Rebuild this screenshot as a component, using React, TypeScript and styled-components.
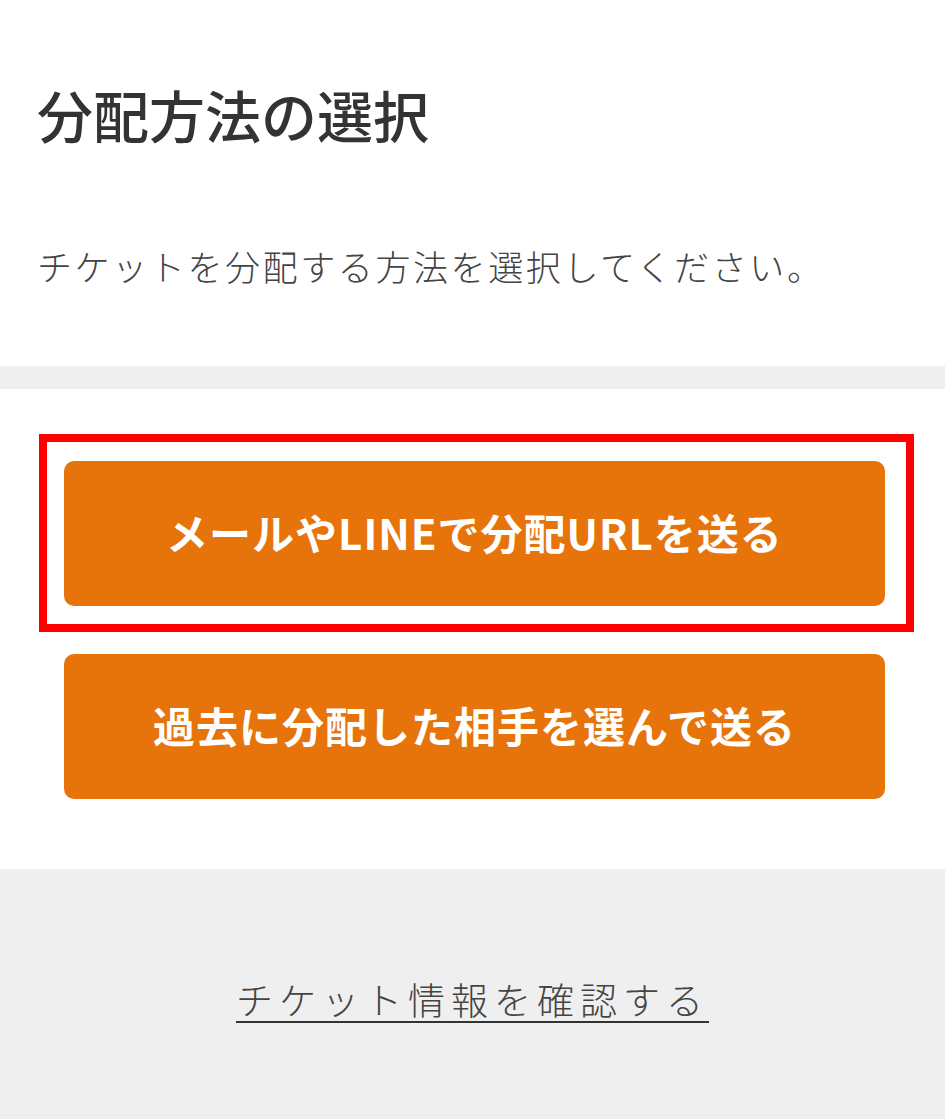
import React from "react";
import styled, { createGlobalStyle } from "styled-components";

const Global = createGlobalStyle`
  html, body { margin: 0; padding: 0; background: #ffffff; }
  body { font-family: "Noto Sans CJK JP", "Noto Sans", sans-serif; color: #333; }
  * { box-sizing: border-box; }
`;

const Page = styled.div`
  display: flex;
  flex-direction: column;
  min-height: 1119px;
`;

const Header = styled.section`
  background: #fff;
  padding: 72px 37px 74px;
  display: flex;
  flex-direction: column;
  gap: 84px;
`;

const Title = styled.h1`
  margin: 0;
  font-size: 56px;
  line-height: 84px;
  font-weight: 500;
  color: #333;
`;

const Lead = styled.p`
  margin: 0;
  font-size: 35px;
  line-height: 52px;
  letter-spacing: 2.6px;
  font-weight: 300;
  color: #444;
`;

const Band = styled.div`
  height: 23px;
  background: #efefef;
`;

const Actions = styled.section`
  background: #fff;
  padding: 72px 60px 70px 64px;
  display: flex;
  flex-direction: column;
  gap: 48px;
`;

const ActionButton = styled.button<{ $highlight?: boolean }>`
  position: relative;
  height: 145px;
  width: 100%;
  border: none;
  border-radius: 10px;
  background: #e7740b;
  color: #fff;
  font-family: "Noto Sans CJK JP", "Noto Sans", sans-serif;
  font-size: 42px;
  font-weight: 700;
  letter-spacing: 1px;
  padding: 0 0 5px;
  cursor: pointer;
  &::after {
    content: "";
    display: ${(p) => (p.$highlight ? "block" : "none")};
    position: absolute;
    top: -27px;
    left: -25px;
    right: -29px;
    bottom: -26px;
    border: 8px solid #ff0000;
    pointer-events: none;
  }
`;

const Footer = styled.footer`
  flex: 1;
  background: #efefef;
  display: flex;
  justify-content: center;
  padding-top: 102px;
`;

const InfoLink = styled.a`
  height: 56px;
  font-size: 37px;
  line-height: 56px;
  letter-spacing: 6px;
  font-weight: 300;
  color: #444;
  text-decoration: underline;
  text-decoration-color: #333;
  text-decoration-thickness: 2px;
  text-underline-offset: 6px;
  cursor: pointer;
`;

export default function App() {
  return (
    <Page>
      <Global />
      <Header>
        <Title>分配方法の選択</Title>
        <Lead>チケットを分配する方法を選択してください。</Lead>
      </Header>
      <Band />
      <Actions>
        <ActionButton $highlight>メールやLINEで分配URLを送る</ActionButton>
        <ActionButton>過去に分配した相手を選んで送る</ActionButton>
      </Actions>
      <Footer>
        <InfoLink>チケット情報を確認する</InfoLink>
      </Footer>
    </Page>
  );
}
